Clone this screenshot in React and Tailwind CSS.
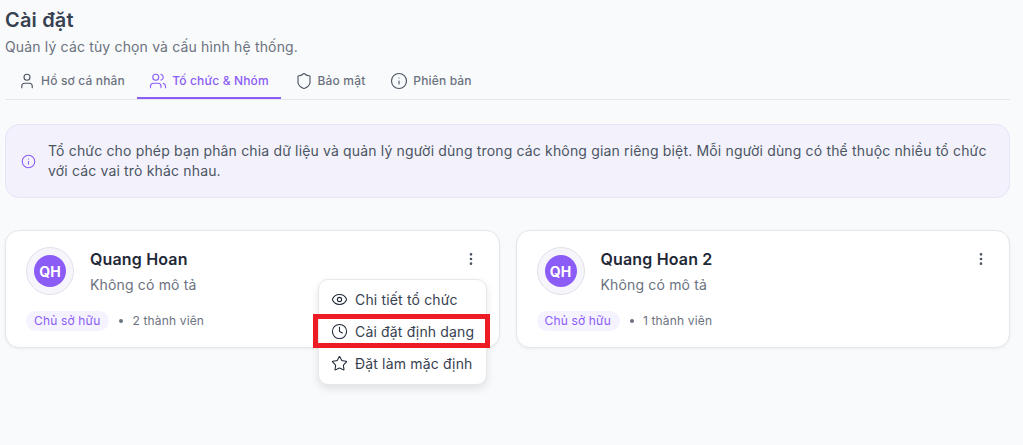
import { User, Users, Shield, Info, EllipsisVertical, Eye, Clock, Star } from "lucide-react";

function Tab({ icon: Icon, label, active, w }) {
  return (
    <div className={`flex h-[37px] items-center justify-center gap-[5px] whitespace-nowrap border-b-2 pt-[2px] ${w} ${active ? "border-[#8b5cf6] text-[#8b5cf6]" : "border-transparent text-[#6b7280]"}`}>
      <Icon size={18} strokeWidth={1.5} className={active ? "text-[#8b5cf6]" : "text-[#4b5563]"} />
      <span className="text-[12px] font-medium">{label}</span>
    </div>
  );
}

function Card({ name, members, menu }) {
  return (
    <div className="relative h-[118px] rounded-[14px] border border-[#e5e7eb] bg-white pl-[20px] pt-[16px] shadow-[0_1px_3px_rgba(0,0,0,0.06)]">
      <div className="flex">
        <div className="flex h-[48px] w-[48px] items-center justify-center rounded-full border border-[#e2e0ea] bg-[#f7f5fc]">
          <div className="flex h-[32px] w-[32px] items-center justify-center rounded-full bg-[#8b5cf6] text-[14px] font-bold text-white">QH</div>
        </div>
        <div className="ml-[16px]">
          <div className="text-[16px] font-semibold leading-[24px] text-[#1f2937]">{name}</div>
          <div className="mt-[2px] text-[14px] leading-[24px] text-[#6b7280]">Không có mô tả</div>
        </div>
      </div>
      <div className="mt-[14px] flex items-center text-[12px]">
        <span className="rounded-full bg-[#f5f3ff] pl-[8px] pr-[9px] py-[2px] leading-[16px] text-[#8b5cf6]">Chủ sở hữu</span>
        <span className="ml-[10px] h-[4px] w-[4px] rounded-full bg-[#6b7280]" />
        <span className="ml-[9px] text-[#6b7280]">{members} thành viên</span>
      </div>
      <EllipsisVertical size={16} strokeWidth={2} className="absolute right-[20px] top-[20px] text-[#4b5563]" />
      {menu}
    </div>
  );
}

function MenuItem({ icon: Icon, label, h = "h-[32px]" }) {
  return (
    <div className={`flex items-center gap-[7px] whitespace-nowrap pl-[12px] pr-[11px] text-[14px] text-[#374151] ${h}`}>
      <Icon size={17} strokeWidth={1.5} className="text-[#1f2937]" />
      <span>{label}</span>
    </div>
  );
}

export default function App() {
  return (
    <div className="h-[445px] overflow-hidden bg-[#f9fafb] pl-[5px] pr-[13px] font-['Inter',sans-serif] tracking-[0.01em]">
      <h1 className="pt-[6px] text-[20px] font-semibold leading-[28px] text-[#374151]">Cài đặt</h1>
      <p className="mt-[3px] text-[14px] leading-[20px] text-[#6b7280]">Quản lý các tùy chọn và cấu hình hệ thống.</p>
      <div className="mt-[5px] flex h-[38px] border-b border-[#e5e7eb] pl-[13px]">
        <Tab icon={User} label="Hồ sơ cá nhân" w="w-[107px] mr-[12px]" />
        <Tab icon={Users} label="Tố chức & Nhóm" active w="w-[144px] mr-[13px]" />
        <Tab icon={Shield} label="Bảo mật" w="w-[72px] mr-[23px]" />
        <Tab icon={Info} label="Phiên bản" w="w-[84px]" />
      </div>
      <div className="mt-[24px] flex h-[74px] items-center rounded-[14px] border border-[#e7e3f8] bg-[#f3f2fc] pl-[15px] pr-[14px]">
        <Info size={15} strokeWidth={1.75} className="shrink-0 text-[#8b5cf6]" />
        <p className="ml-[12px] text-[14px] leading-[20px] text-[#4b5563]">
          Tổ chức cho phép bạn phân chia dữ liệu và quản lý người dùng trong các không gian riêng biệt. Mỗi người dùng có thể thuộc nhiều tổ chức với các vai trò khác nhau.
        </p>
      </div>
      <div className="mt-[32px] grid grid-cols-2 gap-[16px]">
        <Card
          name="Quang Hoan"
          members={2}
          menu={
            <div className="absolute left-[312px] top-[48px] z-10 w-[169px] rounded-[10px] border border-[#e5e7eb] bg-white pb-[4px] pt-[3px] shadow-[0_4px_8px_rgba(0,0,0,0.1)]">
              <MenuItem icon={Eye} label="Chi tiết tổ chức" />
              <div className="relative">
                <MenuItem icon={Clock} label="Cài đặt định dạng" />
                <div className="pointer-events-none absolute -left-[6px] -right-[4px] -top-[1px] h-[34px] border-[5px] border-[#ed1c24]" />
              </div>
              <MenuItem icon={Star} label="Đặt làm mặc định" h="h-[33px]" />
            </div>
          }
        />
        <Card name="Quang Hoan 2" members={1} />
      </div>
    </div>
  );
}
